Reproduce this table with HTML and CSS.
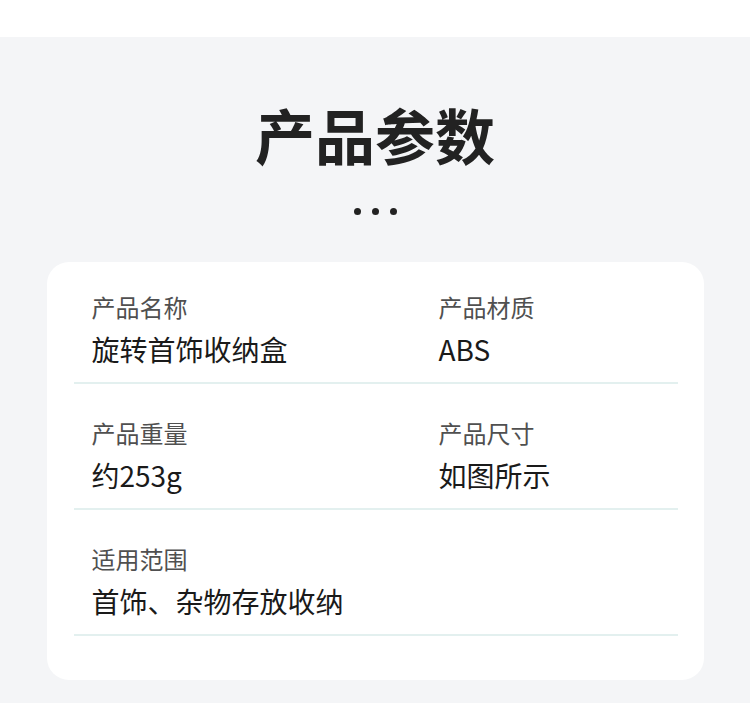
FILE: index.html
```html
<!DOCTYPE html>
<html lang="zh">
<head>
<meta charset="utf-8">
<link rel="stylesheet" href="styles.css">
</head>
<body>
<div class="topband"></div>
<section class="params">
  <h1 class="title">产品参数</h1>
  <div class="dots"><span></span><span></span><span></span></div>
  <div class="card">
    <div class="row">
      <div class="cell"><div class="label">产品名称</div><div class="value">旋转首饰收纳盒</div></div>
      <div class="cell"><div class="label">产品材质</div><div class="value">ABS</div></div>
    </div>
    <div class="row">
      <div class="cell"><div class="label">产品重量</div><div class="value">约253g</div></div>
      <div class="cell"><div class="label">产品尺寸</div><div class="value">如图所示</div></div>
    </div>
    <div class="row">
      <div class="cell"><div class="label">适用范围</div><div class="value">首饰、杂物存放收纳</div></div>
    </div>
  </div>
</section>
</body>
</html>
```
FILE: styles.css
```css
html, body {
  margin: 0;
  padding: 0;
  background: #f4f5f7;
  font-family: "Noto Sans CJK SC", "Noto Sans", sans-serif;
}
.topband {
  height: 37px;
  background: #ffffff;
}
.params {
  padding-top: 67px;
}
.title {
  margin: 0;
  text-align: center;
  font-size: 60px;
  line-height: 60px;
  font-weight: 700;
  color: #222222;
}
.dots {
  display: flex;
  justify-content: center;
  gap: 11px;
  margin-top: 44px;
}
.dots span {
  width: 7px;
  height: 7px;
  border-radius: 50%;
  background: #222222;
}
.card {
  width: 657px;
  margin: 47px auto 0;
  background: #ffffff;
  border-radius: 22px;
  padding: 0 26px 44px 27px;
  box-sizing: border-box;
}
.row {
  display: grid;
  grid-template-columns: 347px 1fr;
  padding: 32px 18px 13px;
  border-bottom: 2px solid #e3f0ef;
}
.row:first-child {
  padding-top: 28px;
}
.label {
  font-size: 24px;
  line-height: 34px;
  color: #505050;
}
.value {
  margin-top: 5px;
  font-size: 28px;
  line-height: 40px;
  color: #1a1a1a;
}
```
